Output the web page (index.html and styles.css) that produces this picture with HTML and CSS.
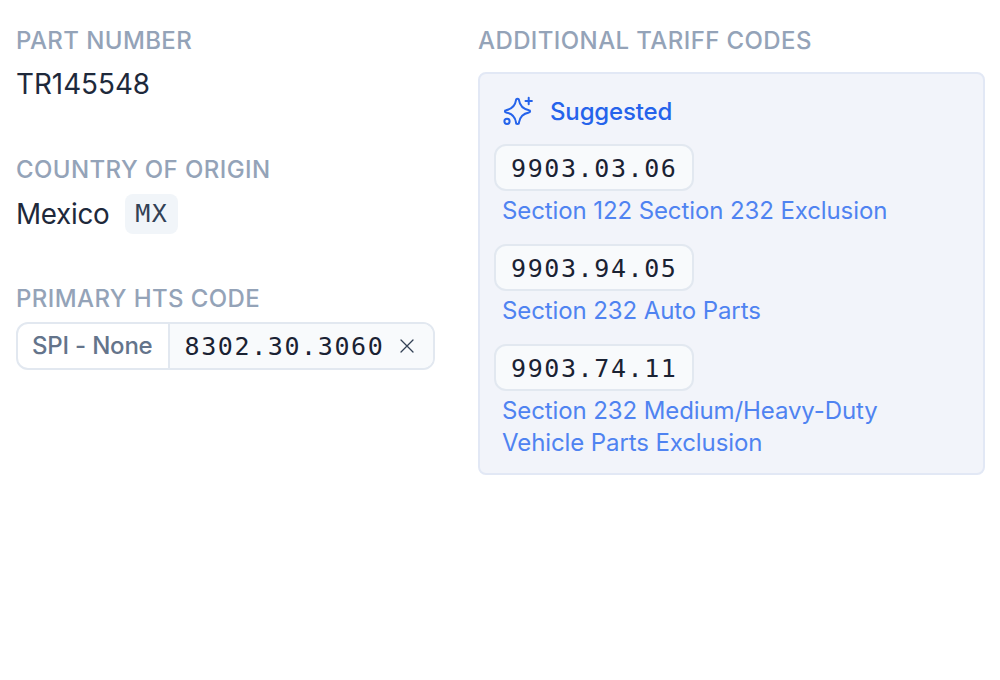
FILE: index.html
```html
<!DOCTYPE html>
<html lang="en">
<head>
<meta charset="utf-8">
<title>Part details</title>
<link rel="stylesheet" href="styles.css">
</head>
<body>
<main class="layout">
  <section class="col-left">
    <div class="field">
      <div class="label">PART NUMBER</div>
      <div class="value">TR145548</div>
    </div>
    <div class="field">
      <div class="label">COUNTRY OF ORIGIN</div>
      <div class="value country"><span class="country-name">Mexico</span> <span class="iso">MX</span></div>
    </div>
    <div class="field">
      <div class="label">PRIMARY HTS CODE</div>
      <div class="hts">
        <span class="spi">SPI - None</span>
        <span class="hts-code"><span class="mono">8302.30.3060</span>
          <svg class="close" viewBox="0 0 16 16" width="16" height="16" fill="none" stroke="#334155" stroke-width="1.3" stroke-linecap="round"><path d="M2 2l12 12M14 2L2 14"/></svg>
        </span>
      </div>
    </div>
  </section>
  <section class="col-right">
    <div class="label">ADDITIONAL TARIFF CODES</div>
    <div class="panel">
      <div class="suggest">
        <svg viewBox="0 0 32 32" width="32" height="32" fill="none" stroke="#2563eb" stroke-width="2" stroke-linecap="round" stroke-linejoin="round"><path d="M14 5.200a1.500 1.500 0 0 1 3 0c.8 5.500 3.500 8.800 10 10a1.100 1.100 0 0 1 0 2.200c-6.500 1.200-9.200 4.500-10 10a1.500 1.500 0 0 1-3 0c-.8-5.500-3.500-8.800-10-10a1.100 1.100 0 0 1 0-2.200c6.500-1.200 9.200-4.500 10-10z"/><path d="M26.700 2.800v6.400M23.500 6h6.400"/><circle cx="5" cy="26.300" r="2.600"/></svg>
        <span>Suggested</span>
      </div>
      <div class="code-item"><span class="code mono">9903.03.06</span><div class="desc">Section 122 Section 232 Exclusion</div></div>
      <div class="code-item"><span class="code mono">9903.94.05</span><div class="desc">Section 232 Auto Parts</div></div>
      <div class="code-item"><span class="code mono">9903.74.11</span><div class="desc">Section 232 Medium/Heavy-Duty<br>Vehicle Parts Exclusion</div></div>
    </div>
  </section>
</main>
</body>
</html>
```

FILE: styles.css
```css
* { box-sizing: border-box; }
html, body { margin: 0; background: #fff; }
body { font-family: Inter, "Liberation Sans", sans-serif; color: #1e293b; width: 1000px; height: 680px; overflow: hidden; }
.layout { display: flex; padding: 24px 15px 0 16px; gap: 43px; align-items: flex-start; }
.col-left { width: 419px; flex: none; display: flex; flex-direction: column; }
.field { height: 129px; }
.col-right { flex: 1; }
.label { font-size: 24px; line-height: 32px; color: #94a3b8; font-weight: 450; letter-spacing: 0.4px; padding-top: 1px; height: 32px; }
.value { font-size: 27.8px; line-height: 36px; margin-top: 10px; color: #1e293b; }
.mono { font-family: "DejaVu Sans Mono", monospace; font-size: 25px; letter-spacing: 1.6px; color: #1a2233; }
.country { display: flex; gap: 16px; align-items: flex-start; margin-top: 9px; }
.country-name { padding-top: 2px; letter-spacing: -0.3px; }
.iso { font-family: "DejaVu Sans Mono", monospace; font-size: 25px; letter-spacing: 1.6px; line-height: 40px; background: #f1f5f9; border-radius: 8px; width: 53px; height: 40px; color: #334155; text-align: center; }
.hts { display: flex; border: 2px solid #e2e8f0; border-radius: 12px; height: 48px; margin-top: 8px; }
.spi { padding: 0 15px 0 14px; font-size: 24px; color: #64748b; line-height: 44px; border-right: 2px solid #e2e8f0; font-weight: 450; letter-spacing: -0.2px; }
.hts-code { flex: 1; background: #f8fafc; border-radius: 0 10px 10px 0; display: flex; align-items: center; gap: 15px; padding-left: 15px; }
.panel { margin-top: 16px; background: #f2f4fa; border: 2px solid #e2e8f5; border-radius: 8px; padding: 21px 16px 14px 14px; height: 403px; }
.suggest { display: flex; align-items: center; gap: 16px; padding-left: 8px; color: #2563eb; font-size: 24px; font-weight: 450; letter-spacing: -0.15px; height: 32px; margin-bottom: 17px; }
.code-item { margin-bottom: 17px; }
.code { display: block; width: 200px; height: 47px; line-height: 46px; background: #f8fafc; border: 2px solid #e2e8f0; border-radius: 12px; padding-left: 15px; }
.desc { color: #4f83f1; font-size: 24px; line-height: 32px; padding-left: 8px; margin-top: 4px; letter-spacing: -0.1px; }
```
